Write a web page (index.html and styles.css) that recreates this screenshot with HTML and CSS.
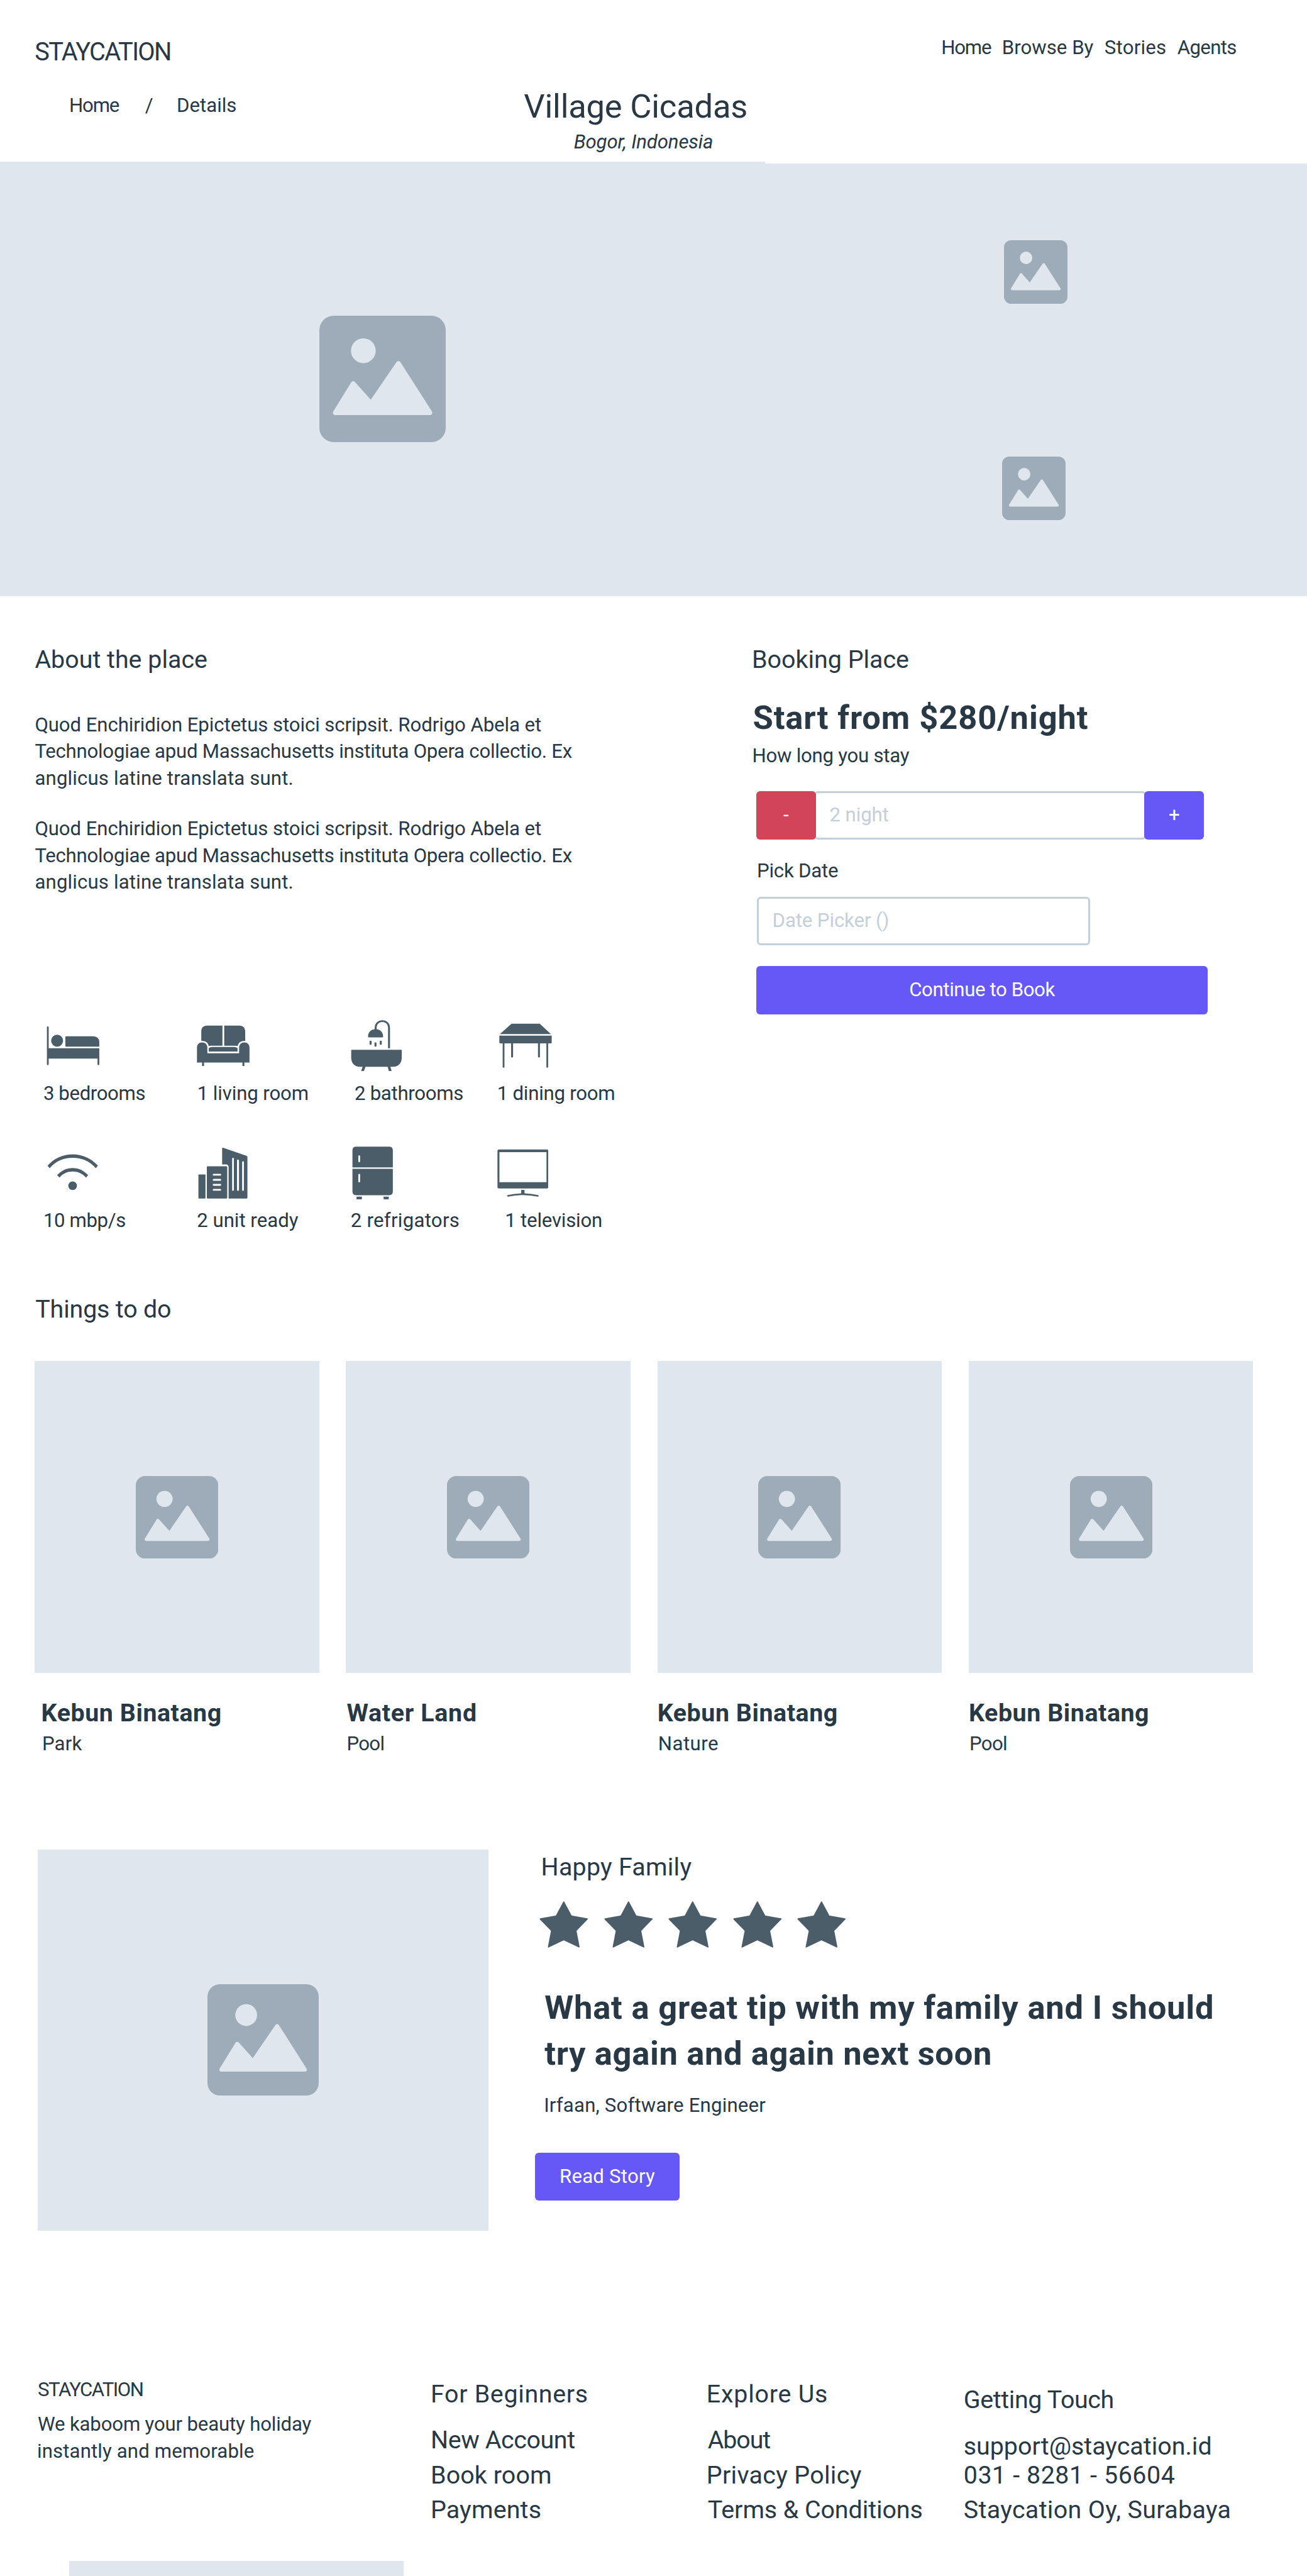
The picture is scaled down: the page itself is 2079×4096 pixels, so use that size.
FILE: index.html
```html
<!DOCTYPE html>
<html lang="en">
<head>
<meta charset="utf-8">
<title>Staycation - Village Cicadas</title>
<link rel="stylesheet" href="styles.css">
</head>
<body>
<svg class="defs" width="0" height="0" aria-hidden="true">
  <symbol id="picture" viewBox="0 0 100 100">
    <rect width="100" height="100" rx="11.3" fill="#9dacb8"/>
    <circle cx="34.8" cy="27.7" r="9.8" fill="#dfe6ed"/>
    <path d="M12.6 76.7 26.8 53.7 40.9 69.5 62.6 37.8 87.4 76.7Z" fill="#dfe6ed" stroke="#dfe6ed" stroke-width="3.8" stroke-linejoin="round"/>
  </symbol>
  <symbol id="star" viewBox="0 0 78 75">
    <path d="M39 1.4 51 23.9 76.5 28.4 58.4 47.2 63.4 73.2 39 61.4 14.6 73.2 19.6 47.2 1.5 28.4 27 23.9Z" fill="#4c5d6a" stroke="#4c5d6a" stroke-width="2" stroke-linejoin="round"/>
  </symbol>
</svg>

<header class="topbar">
  <a class="logo">STAYCATION</a>
  <nav class="nav"><a class="home">Home</a><a>Browse By</a><a class="stories">Stories</a><a class="agents">Agents</a></nav>
</header>

<section class="intro">
  <div class="crumbs"><a class="home">Home</a><span class="slash">/</span><a>Details</a></div>
  <div class="place">
    <h1>Village Cicadas</h1>
    <p class="region">Bogor, Indonesia</p>
  </div>
</section>

<section class="hero">
  <div class="shot shot-main"><svg class="pic-lg"><use href="#picture"/></svg></div>
  <div class="side">
    <div class="shot"><svg class="pic-sm"><use href="#picture"/></svg></div>
    <div class="shot shot-last"><svg class="pic-sm"><use href="#picture"/></svg></div>
  </div>
</section>

<main>
<div class="details">
  <section class="about">
    <h2>About the place</h2>
    <p class="copy"><span class="l1">Quod Enchiridion Epictetus stoici scripsit. Rodrigo Abela et</span><br><span class="l2">Technologiae apud Massachusetts instituta Opera collectio. Ex</span><br><span class="l3">anglicus latine translata sunt.</span></p>
    <p class="copy"><span class="l1">Quod Enchiridion Epictetus stoici scripsit. Rodrigo Abela et</span><br><span class="l2">Technologiae apud Massachusetts instituta Opera collectio. Ex</span><br><span class="l3">anglicus latine translata sunt.</span></p>

    <ul class="amenities">
      <li class="bed">
        <svg viewBox="90 90 272 330" preserveAspectRatio="none">
          <path d="M92 141Q92 137 96.500 137T101 141V273H356Q359 273 359 277V374Q359 379 354.500 379T350 374V338H101V374Q101 379 96.500 379T92 374Z"/>
          <ellipse cx="144" cy="226.500" rx="30.500" ry="37.500"/>
          <path d="M189 199H328C346 199 359 214 359 236V261Q359 264 356 264H189Q186 264 186 261V202Q186 199 189 199Z"/>
        </svg>
        <span>3 bedrooms</span>
      </li>
      <li class="sofa">
        <svg viewBox="855 90 271 330" preserveAspectRatio="none">
          <path d="M986 132H908C888 132 878 147 878 168V227C900 227 913 238 916 260Q920 258 926 258H986Z"/>
          <path d="M995 132H1072C1091 132 1102 147 1102 168V227C1080 227 1067 238 1064 260Q1058 258 1052 258H995Z"/>
          <path d="M916 294V272Q924 266 934 266H1046Q1056 266 1063 272V294Z"/>
          <path d="M856 363V270C856 250 867 237 882.500 237S909 250 909 270V305H1071V270C1071 250 1082 237 1097.500 237S1124 250 1124 270V363H1098V384H1088V363H892V384H882V363Z"/>
        </svg>
        <span>1 living room</span>
      </li>
      <li class="bath">
        <svg viewBox="124 90 262 330" preserveAspectRatio="none">
          <path d="M246 155V146C246 118 263 99 285 99S324 118 324 146V273H314V146C314 124 302 110 285 110S256 124 256 146V155C276 158 289 176 289 200Q289 206 285 206H216Q212 206 212 200C212 176 225 158 246 155Z"/>
          <rect x="220" y="226" width="10" height="26" rx="4"/>
          <rect x="245" y="237" width="10" height="27" rx="4"/>
          <rect x="272" y="226" width="10" height="26" rx="4"/>
          <path d="M129 283H380Q384 283 384 288V332C384 366 366 389 340 389H326L332 416H318L312 389H199L191 416H177L184 389H170C144 389 126 366 126 332V288Q126 283 129 283Z"/>
        </svg>
        <span>2 bathrooms</span>
      </li>
      <li class="table">
        <svg viewBox="880 90 270 330" preserveAspectRatio="none">
          <path d="M943 120H1087L1144 185H884Z"/>
          <path d="M881 195H1148V238Q1148 243 1144 243H1130V391Q1130 395 1125.500 395T1121 391V243H1088V326Q1088 331 1083 331T1078 326V243H951V326Q951 331 946 331T941 326V243H907V391Q907 395 902.500 395T898 391V243H885Q881 243 881 238Z"/>
        </svg>
        <span>1 dining room</span>
      </li>
      <li class="wifi">
        <svg viewBox="95 880 261 340" preserveAspectRatio="none">
          <path d="M97 1004C130 958 174 933 225 933S320 958 354 1004L343 1019C312 976 272 955 225 955S139 976 108 1019Z"/>
          <path d="M146 1063C168 1033 195 1018 225 1018S282 1033 304 1063L293 1078C274 1052 250 1040 225 1040S176 1052 158 1078Z"/>
          <ellipse cx="225" cy="1128.500" rx="22" ry="27"/>
        </svg>
        <span>10 mbp/s</span>
      </li>
      <li class="units">
        <svg viewBox="863 880 254 340" preserveAspectRatio="none">
          <rect x="865" y="1059" width="36" height="150" rx="3"/>
          <path fill-rule="evenodd" d="M911 1008H1008Q1012 1008 1012 1013V1204Q1012 1209 1008 1209H911Q908 1209 908 1204V1013Q908 1008 911 1008ZM942 1055Q938 1055 938 1060.500T942 1066H977Q981 1066 981 1060.500T977 1055ZM942 1086Q938 1086 938 1092T942 1098H977Q981 1098 981 1092T977 1086ZM942 1118Q938 1118 938 1123.500T942 1129H977Q981 1129 981 1123.500T977 1118ZM942 1149Q938 1149 938 1155T942 1160H977Q981 1160 981 1155T977 1149Z"/>
          <path fill-rule="evenodd" d="M986 895Q986 890 991 892L1112 943Q1115 945 1115 950V1204Q1115 1209 1111 1209H1019V1014Q1019 996 1006 996H986ZM1041 955Q1037 955 1037 960V1156Q1037 1161 1041 1161T1046 1156V960Q1046 955 1041 955ZM1067 965Q1062 965 1062 970V1156Q1062 1161 1067 1161T1072 1156V970Q1072 965 1067 965ZM1093 976Q1088 976 1088 981V1156Q1088 1161 1093 1161T1097 1156V981Q1097 976 1093 976Z"/>
        </svg>
        <span>2 unit ready</span>
      </li>
      <li class="fridge">
        <svg viewBox="130 880 210 340" preserveAspectRatio="none">
          <path fill-rule="evenodd" d="M151 885H319Q338 885 338 908V1014H132V908Q132 885 151 885ZM166.500 939Q162 939 162 944V977Q162 982 166.500 982T171 977V944Q171 939 166.500 939Z"/>
          <path fill-rule="evenodd" d="M132 1023H338V1165Q338 1188 319 1188H151Q132 1188 132 1165ZM166.500 1055Q162 1055 162 1060V1103Q162 1108 166.500 1108T171 1103V1060Q171 1055 166.500 1055Z"/>
          <rect x="153" y="1197" width="27" height="17" rx="2"/>
          <rect x="291" y="1197" width="26" height="17" rx="2"/>
        </svg>
        <span>2 refrigators</span>
      </li>
      <li class="tv">
        <svg viewBox="869 880 261 340" preserveAspectRatio="none">
          <path fill-rule="evenodd" d="M877 903H1122Q1129 903 1129 911V1138Q1129 1146 1122 1146H877Q870 1146 870 1138V911Q870 903 877 903ZM880 919V1107H1120V919Z"/>
          <path d="M991 1155H1008V1176Q1045 1178 1077 1187Q1081 1189 1080 1193T1075 1197Q1040 1188 1000 1187T925 1197Q920 1197 919 1193T922 1187Q955 1178 991 1176Z"/>
        </svg>
        <span>1 television</span>
      </li>
    </ul>
  </section>

  <section class="booking">
    <h2>Booking Place</h2>
    <p class="price">Start from $280/night</p>
    <p class="label stay">How long you stay</p>
    <div class="stepper">
      <button class="btn minus">-</button>
      <div class="input nights"><span>2 night</span></div>
      <button class="btn plus">+</button>
    </div>
    <p class="label pick">Pick Date</p>
    <div class="input date"><span>Date Picker ()</span></div>
    <button class="btn book">Continue to Book</button>
  </section>
</div>

<section class="things">
  <h2>Things to do</h2>
  <div class="cards">
    <article class="card inset">
      <div class="photo"><svg class="pic-md"><use href="#picture"/></svg></div>
      <h3>Kebun Binatang</h3><p class="park">Park</p>
    </article>
    <article class="card">
      <div class="photo"><svg class="pic-md"><use href="#picture"/></svg></div>
      <h3 class="water">Water Land</h3><p class="pool">Pool</p>
    </article>
    <article class="card">
      <div class="photo"><svg class="pic-md"><use href="#picture"/></svg></div>
      <h3>Kebun Binatang</h3><p class="nature">Nature</p>
    </article>
    <article class="card">
      <div class="photo"><svg class="pic-md"><use href="#picture"/></svg></div>
      <h3>Kebun Binatang</h3><p class="pool">Pool</p>
    </article>
  </div>
</section>

<section class="story">
  <div class="story-photo"><svg class="pic-story"><use href="#picture"/></svg></div>
  <div class="story-text">
    <h2>Happy Family</h2>
    <div class="stars">
      <svg><use href="#star"/></svg><svg><use href="#star"/></svg><svg><use href="#star"/></svg><svg><use href="#star"/></svg><svg><use href="#star"/></svg>
    </div>
    <blockquote>What a great tip with my family and I should<br><span class="q2">try again and again next soon</span></blockquote>
    <p class="author">Irfaan, Software Engineer</p>
    <button class="btn read">Read Story</button>
  </div>
</section>
</main>

<footer class="footer">
  <div class="f-brand">
    <p class="f-logo">STAYCATION</p>
    <p class="f-tag">We kaboom your beauty holiday<br><span class="t2">instantly and memorable</span></p>
  </div>
  <div class="f-col">
    <h4 class="fb">For Beginners</h4>
    <a class="na">New Account</a><a class="br">Book room</a><a class="pm">Payments</a>
  </div>
  <div class="f-col">
    <h4 class="eu">Explore Us</h4>
    <a class="ab">About</a><a class="pp">Privacy Policy</a><a class="tc">Terms &amp; Conditions</a>
  </div>
  <div class="f-col touch">
    <h4 class="gt">Getting Touch</h4>
    <a>support@staycation.id</a><a class="phone">031 - 8281 - 56604</a><a class="addr">Staycation Oy, Surabaya</a>
  </div>
</footer>
<div class="strip"></div>
</body>
</html>
```
FILE: styles.css
```css
* { box-sizing: border-box; margin: 0; padding: 0; }

html, body { height: 4096px; overflow: hidden; }

body {
  width: 2079px;
  background: #fff;
  color: #283845;
  font-family: Roboto, sans-serif;
  font-size: 31.2px;
  line-height: 42.8px;
  white-space: nowrap;
}

.defs { display: block; width: 0; height: 0; }
svg { display: block; }
ul { list-style: none; }

h2, h4 { font-size: 39.4px; line-height: 50px; font-weight: 400; }

/* Header */
.topbar { display: flex; justify-content: space-between; height: 138.5px; padding: 0 112.3px 0 55.3px; }
.logo { margin-top: 57.8px; font-size: 39.8px; line-height: 50px; letter-spacing: -1.65px; }
.nav { display: flex; gap: 17.5px; margin-top: 55.2px; }
.home { letter-spacing: -1.2px; }
.stories { letter-spacing: .2px; }
.agents { letter-spacing: -.66px; }

.intro { display: flex; height: 118.5px; padding-left: 110px; }
.crumbs { display: flex; gap: 38.5px; width: 723.3px; padding-top: 8.500px; }
.slash { margin-left: 3px; margin-right: -1px; }
h1 { font-size: 52.5px; line-height: 60px; font-weight: 400; letter-spacing: -.2px; }
.region { padding: 6.500px 0 0 79.500px; font-style: italic; letter-spacing: -.14px; }

/* Hero */
.hero { display: flex; height: 691px; }
.shot { display: flex; align-items: center; justify-content: center; background: #dfe6ed; }
.shot-main { width: 1216.5px; }
.side { flex: 1; display: flex; flex-direction: column; padding-top: 3px; }
.side .shot { flex: 1; }
.side .shot-last { padding-right: 7px; }
.pic-lg { width: 201px; height: 201px; }
.pic-sm { width: 101px; height: 101px; }

/* Details */
.details { display: flex; padding: 76px 0 0 55.4px; }
.about { width: 1140.6px; }
.copy { margin-bottom: 36.9px; }
.about h2 { margin-bottom: 57.500px; }
.l1 { letter-spacing: -.09px; }
.l2 { letter-spacing: -.25px; }
.l3 { letter-spacing: .15px; }

.amenities {
  display: grid;
  grid-template-columns: 243.7px 245.1px 233px 200px;
  row-gap: 60.5px;
  padding-left: 13.5px;
  margin-top: 195.3px;
}
.amenities svg { height: 84.1px; fill: #4c5d6a; margin-bottom: 13.900px; }
.amenities span { display: block; }
.bed svg { width: 84.9px; margin-left: 5px; }
.bed span { letter-spacing: -.39px; }
.sofa svg { width: 84.5px; }
.sofa span { margin-left: 1.1px; letter-spacing: -.11px; }
.bath svg { width: 81.7px; margin-left: .7px; }
.bath span { margin-left: 6.3px; letter-spacing: -.3px; }
.table svg { width: 84.2px; margin-left: 3.6px; }
.table span { letter-spacing: -.24px; }
.wifi svg, .units svg, .fridge svg, .tv svg { height: 86.6px; margin-bottom: 11.7px; }
.wifi svg { width: 81.4px; margin-left: 6.6px; }
.wifi span { letter-spacing: -.39px; }
.units svg { width: 79.2px; margin-left: 2.5px; }
.units span { margin-left: .6px; }
.fridge svg { width: 65.5px; margin-left: 2.6px; }
.fridge span { letter-spacing: .27px; }
.tv svg { width: 81.4px; margin-left: .2px; }
.tv span { margin-left: 12.5px; letter-spacing: -.2px; }

/* Booking */
.price { margin-top: 36.6px; padding-left: 1.5px; font-size: 52.5px; line-height: 60px; font-weight: 700; letter-spacing: .89px; }
.stay { margin: 10px 0 34.7px; padding-left: .5px; letter-spacing: -.25px; }
.pick { margin: 29.1px 0 19.8px; padding-left: 8px; letter-spacing: -.21px; }
.btn {
  display: block;
  height: 76.5px;
  border: 0;
  border-radius: 6px;
  background: #6658f6;
  color: #fff;
  font: 400 31.2px/42.8px Roboto, sans-serif;
  text-align: center;
}
.input {
  display: flex;
  align-items: center;
  height: 76.5px;
  padding-left: 21.2px;
  border: 3px solid #c4cfd9;
  border-radius: 6px;
  color: #c4cfd9;
  letter-spacing: -.12px;
}
.stepper { display: flex; padding-left: 6.8px; }
.stepper .btn { position: relative; width: 95px; }
.stepper .minus { background: #d14459; }
.nights { width: 527.4px; margin: 0 -2.4px; }
.date { width: 529.2px; margin-left: 8.4px; }
.book { width: 718.5px; margin: 33.5px 0 0 6.8px; letter-spacing: -.4px; }

/* Things to do */
.things { padding: 94.5px 0 0 55.1px; }
.things h2 { padding-left: 1.2px; letter-spacing: -.17px; }
.cards { display: grid; grid-template-columns: repeat(4, 452.5px); gap: 42.8px; margin-top: 57.1px; }
.photo { display: flex; align-items: center; justify-content: center; height: 495.7px; background: #dfe6ed; }
.pic-md { width: 131.3px; height: 131.3px; }
.card h3 { margin-top: 39px; font-size: 39.4px; line-height: 50px; font-weight: 700; letter-spacing: .54px; }
.card .water { padding-left: 1px; letter-spacing: .7px; }
.card p { margin-top: 2.9px; padding-left: 1px; letter-spacing: .2px; }
.card .pool { letter-spacing: -.65px; }
.card .nature { letter-spacing: .5px; }
.inset h3 { padding-left: 10.500px; }
.card.inset p { padding-left: 11.8px; }

/* Story */
.story { display: flex; gap: 74.5px; margin-top: 146.3px; padding-left: 59.7px; }
.story-photo { display: flex; align-items: center; justify-content: center; width: 717px; height: 605.6px; background: #dfe6ed; }
.pic-story { width: 177px; height: 177px; }
.story-text { padding-top: 2.6px; }
.story-text h2 { padding-left: 9.4px; letter-spacing: .24px; }
.stars { display: flex; gap: 24.9px; margin-top: 29.8px; padding-left: 7.2px; }
.stars svg { width: 77.5px; height: 74.5px; }
blockquote { margin-top: 57.6px; padding-left: 15.1px; font-size: 52.5px; line-height: 73.4px; font-weight: 700; letter-spacing: .79px; }
.q2 { letter-spacing: .64px; }
.author { margin: 24.2px 0 53.5px; padding-left: 14px; letter-spacing: .18px; }
.read { width: 229.6px; letter-spacing: .2px; }

/* Footer */
.footer { display: grid; grid-template-columns: 625px 438.8px 408.9px 1fr; height: 525.7px; padding: 232.4px 0 0 60px; }
.f-logo { letter-spacing: -1.52px; }
.f-tag { margin-top: 12.2px; letter-spacing: -.18px; }
.t2 { margin-left: -1px; letter-spacing: .12px; }
.f-col { padding-top: 2.6px; }
.f-col h4 { margin-bottom: 20.8px; }
.f-col a { display: block; font-size: 39.4px; line-height: 55.05px; }
.f-col.touch { padding-top: 11.8px; }
.f-col .phone { margin-top: -9.2px; letter-spacing: .57px; }
.fb { letter-spacing: .67px; }
.na { letter-spacing: -.41px; }
.br { letter-spacing: .11px; }
.pm { letter-spacing: .17px; }
.eu { letter-spacing: .77px; }
.ab { padding-left: 2px; letter-spacing: -1.15px; }
.pp { letter-spacing: .31px; }
.tc { padding-left: 2px; letter-spacing: -.08px; }
.gt { letter-spacing: -.37px; }
.addr { letter-spacing: .35px; }

.strip { width: 531.6px; height: 23.6px; margin-left: 110.1px; background: #dfe6ed; }
```
